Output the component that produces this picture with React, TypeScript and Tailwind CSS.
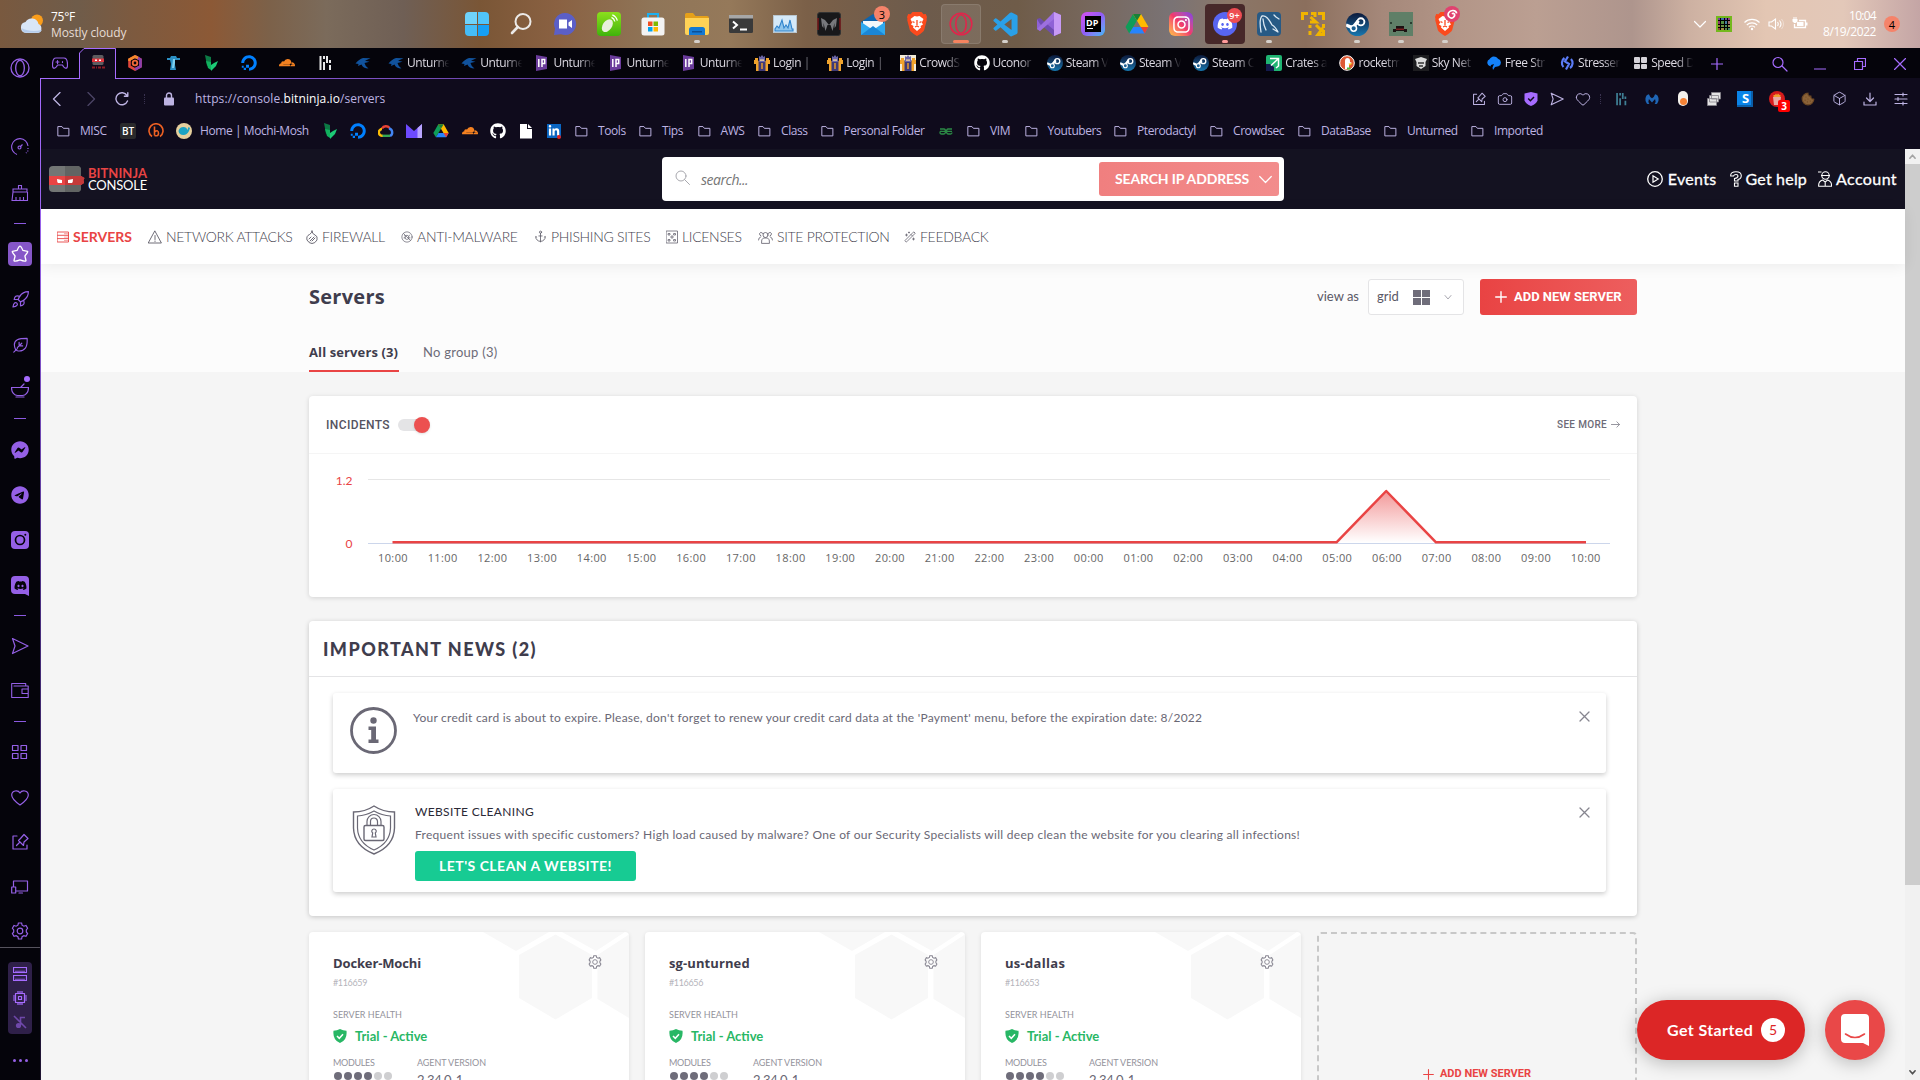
import type { ReactNode } from "react";
import { Anchor, Box, Camera, Cookie, Heart, Rocket, WandSparkles } from "lucide-react";
import {
  FaBrave,
  FaCloudflare,
  FaDigitalOcean,
  FaDiscord,
  FaFacebookMessenger,
  FaGithub,
  FaInstagram,
  FaLinkedinIn,
  FaSteam,
  FaTelegram,
} from "react-icons/fa6";
import { BiLogoVisualStudio } from "react-icons/bi";

/* ---------- small drawing helpers ---------- */

function Svg({ c, box = "0 0 24 24", children }: { c: string; box?: string; children: ReactNode }) {
  return (
    <svg viewBox={box} className={c} fill="none" stroke="currentColor">
      {children}
    </svg>
  );
}

function Line({ d, c, w = 1.2, box = "0 0 18 18" }: { d: string; c: string; w?: number; box?: string }) {
  return (
    <Svg c={c} box={box}>
      <path d={d} strokeWidth={w} strokeLinejoin="round" strokeLinecap="round" />
    </Svg>
  );
}

const FOLDER = "M1.5 4h4.2l1.6 2H13.5v8.500H1.500z";
const PIN = "M6 3H2v13h14v-4M9.500 5.500l3.500-4 4 4-4 3.500-.5 3.500-5-5zM8.500 9.500 5.500 12.500";
const SEND = "M1.500 1.500 17 9 1.500 16.500 4 9z";

function DriveLogo({ c }: { c: string }) {
  return (
    <Svg c={c}>
      <g stroke="none">
        <path d="M8 2 0.500 15 4.300 21.500 12 8.500z" fill="#0f9d58" />
        <path d="M8 2h8l7.500 13h-7.800z" fill="#ffba00" />
        <path d="M8.200 15h15.300l-3.800 6.500H4.300z" fill="#2684fc" />
        <path d="M8 2 12 8.800 16 2z" fill="#188038" />
        <path d="m15.700 15 7.800 0-3.800 6.500z" fill="#ea4335" />
      </g>
    </Svg>
  );
}

function BraveLogo() {
  return (
    <Svg c="size-6">
      <path d="M7.500 0h9l2 2.200 2.300-.3 1.200 3-.5 2 .3 1-2.600 10Q18.500 20 12 24 5.500 20 4.800 17.900L2.200 7.900l.3-1-.5-2 1.200-3 2.300.3z" fill="#fb4a1d" stroke="none" />
      <path d="M12 4.500l2.500-.6L18.500 7l-1.700 3.500 1.200 2-2.500 1.500.5 1.500L12 19l-4-3.500.5-1.500L6 12.500l1.200-2L5.500 7l4-3.100z" fill="#fff" stroke="none" />
      <path d="M12 8v5M9.500 10.500l-2-.8M14.500 10.500l2-.8M10 15l2-1 2 1" stroke="#fb4a1d" strokeWidth="1.300" />
    </Svg>
  );
}

function GreenLeaf({ c }: { c: string }) {
  return (
    <Svg c={c} box="0 0 16 16">
      <g stroke="none">
        <path d="M2 0l6 2v6l-4 3z" fill="#0c7a45" />
        <path d="M3 6l5 1v8l-3-2z" fill="#11b15e" />
        <path d="M8 10l3-2 4-2-2 5-5 5z" fill="#1ccb76" />
      </g>
    </Svg>
  );
}

function Bars({ c }: { c: string }) {
  return (
    <Svg c={c} box="0 0 16 16">
      <path d="M3.500 1v14M7 1v3M7 7v8M10 1v7M13 5v3M13 10v5" strokeWidth="2" />
    </Svg>
  );
}

function Wing() {
  return (
    <Svg c="size-4" box="0 0 16 16">
      <path d="M.5 8.500Q4 4 8 3l7.500.3-5.500 2.500 4.500 1-5 1.200Q10 11 13.500 13.500 8 13.500 6.500 9.500L3 11l.5-2z" fill="#11529c" stroke="none" />
    </Svg>
  );
}

function IpLogo() {
  return (
    <Svg c="size-4" box="0 0 16 16">
      <path d="M2 0l11 2v12L2 16z" fill="#6b3c9b" stroke="none" />
      <path d="M4.800 4v8M8 12V4.500h2.700v4H8" stroke="#fff" strokeWidth="1.500" />
    </Svg>
  );
}

function Warrior({ light }: { light?: boolean }) {
  return (
    <Svg c="size-4" box="0 0 16 16">
      <g stroke="none">
        {light && <path d="M0 0h16v16H0z" fill="#f3ecd9" />}
        <path d="M1 3h3v3h1v10H2V9H0V5h1zM12 3h3v2h1v4h-2v7h-3V6h1z" fill="#f0a32c" />
        <path d="M4.500 5h7v11h-7z" fill="#3f3a76" />
        <path d="M5 1l1.500 1L8 0l1.500 2L11 1v6H5z" fill="#6b66a8" />
        <path d="M6 4.500h4v1.200H6z" fill="#ffe0a0" />
        <path d="M7.300 8h1.400v6H7.300z" fill="#f0a32c" />
      </g>
    </Svg>
  );
}

function SteamLogo({ c }: { c: string }) {
  return (
    <span className={`block overflow-hidden rounded-full bg-linear-to-b from-[#0b1a3c] to-[#1678b0] ${c}`}>
      <Svg c="size-full">
        <path d="M0 12.500 7 15.500 13 8" stroke="#fff" strokeWidth="3.500" />
        <circle cx="15.500" cy="9.200" r="3.700" stroke="#fff" strokeWidth="2" />
        <circle cx="8" cy="16" r="3" stroke="#fff" strokeWidth="1.600" fill="#1a5f92" />
      </Svg>
    </span>
  );
}

function OperaRing({ c }: { c: string }) {
  return (
    <Svg c={c}>
      <circle cx="12" cy="12" r="10.800" strokeWidth="1.600" />
      <ellipse cx="12" cy="12" rx="5.200" ry="9.300" strokeWidth="1.600" />
    </Svg>
  );
}

/* ---------- desktop taskbar ---------- */

function TaskCell({ children, bar, hot }: { children?: ReactNode; bar?: "gray" | "wide" | "pink"; hot?: string }) {
  return (
    <div className="relative flex h-12 w-11 items-center justify-center">
      {hot && <div className={`absolute inset-x-0.5 inset-y-1 rounded ${hot}`} />}
      <div className="relative flex size-6 items-center justify-center">{children}</div>
      {bar === "gray" && <div className="absolute top-10 h-[3px] w-1.5 rounded-full bg-[#d5d0cb]" />}
      {bar === "pink" && <div className="absolute top-10 h-[3px] w-1.5 rounded-full bg-[#ff9a9a]" />}
      {bar === "wide" && <div className="absolute top-10 h-[3px] w-4 rounded-full bg-[#f5835f]" />}
    </div>
  );
}

function Taskbar() {
  return (
    <div className="flex h-12 items-center bg-[linear-gradient(90deg,#79593f_0%,#6f5c4a_4%,#7d5a3f_7%,#8c5936_11%,#7c6149_14%,#7b6b5b_17%,#6f5f55_21%,#7a5636_25%,#8a6142_29%,#8f7558_34%,#95795a_38%,#7b6048_42%,#6d5b4c_48%,#6f5c49_53%,#77685e_57%,#7a7375_61%,#8b7768_64%,#8b6f5d_68%,#a5887a_72%,#b39688_76%,#bb9f92_80%,#ae958d_85%,#cdb1a2_88%,#e3c6b3_92%,#e3c8b9_96%,#c4a5a5_100%)]">
      <div className="flex w-[455px] items-center pl-[20px]">
        <Svg c="h-[22px] w-6" box="0 0 24 22">
          <g stroke="none">
            <circle cx="17" cy="7.500" r="6" fill="#f99d1c" />
            <path d="M6 20a5.500 5.500 0 0 1-.5-10.900A7 7 0 0 1 18.500 11 4.800 4.800 0 0 1 18 20z" fill="#d9e6f7" />
            <path d="M5 19.800h13a4.600 4.600 0 0 0 4-3c-7 2-14 1.500-20-1.500a5 5 0 0 0 3 4.500z" fill="#b6cdec" />
          </g>
        </Svg>
        <div className="ml-[7px] pt-0.5 text-xs leading-4">
          <div className="tracking-[-0.27px] text-white">75°F</div>
          <div className="tracking-[-0.11px] text-[#e6dcd4]">Mostly cloudy</div>
        </div>
      </div>
      <TaskCell>
        <div className="grid size-6 grid-cols-2 gap-px">
          <div className="rounded-tl-sm bg-[#6fd3fb]" />
          <div className="rounded-tr-sm bg-[#50c4fa]" />
          <div className="rounded-bl-sm bg-[#45bdf8]" />
          <div className="rounded-br-sm bg-[#169ff5]" />
        </div>
      </TaskCell>
      <TaskCell>
        <Svg c="size-6 text-[#eceae8]">
          <circle cx="14" cy="9.500" r="7.500" strokeWidth="2" />
          <path d="M8.800 15 3 21" strokeWidth="2.600" strokeLinecap="round" />
        </Svg>
      </TaskCell>
      <TaskCell>
        <Svg c="size-6">
          <path d="M12 1a11 11 0 1 1-4 21.200L1 23l1-6.500A11 11 0 0 1 12 1z" fill="#5b5fc7" stroke="none" />
          <path d="M6 7.500h8v9H6zM15.500 10.500 19 8v8l-3.500-2.500z" fill="#fff" stroke="none" />
        </Svg>
      </TaskCell>
      <TaskCell>
        <div className="flex size-6 items-center justify-center rounded bg-linear-to-b from-[#8be01c] to-[#3eb30c]">
          <Svg c="size-5">
            <ellipse cx="10" cy="14" rx="5.500" ry="8.500" transform="rotate(35 10 14)" fill="#e9f0dc" stroke="none" />
            <path d="M15 4a7 7 0 0 1 4 5M16 1a10 10 0 0 1 6 7" stroke="#fff" strokeWidth="1.500" />
          </Svg>
        </div>
      </TaskCell>
      <TaskCell>
        <Svg c="size-6">
          <path d="M7 6V2h10v4" stroke="#1cb0f0" strokeWidth="2" />
          <rect x="0.500" y="5.500" width="23" height="18" rx="2.500" fill="#f3f3f3" stroke="none" />
          <g stroke="none">
            <path d="M7 9.500h4.500V14H7z" fill="#f25022" />
            <path d="M12.500 9.500H17V14h-4.500z" fill="#7fba00" />
            <path d="M7 15h4.500v4.500H7z" fill="#00a4ef" />
            <path d="M12.500 15H17v4.500h-4.500z" fill="#ffb900" />
          </g>
        </Svg>
      </TaskCell>
      <TaskCell bar="gray">
        <Svg c="size-6">
          <g stroke="none">
            <path d="M0 2.500Q0 1 1.500 1H8l2.500 3H22q2 0 2 2v3H0z" fill="#e5a01a" />
            <path d="M0 6h24v15q0 2-2 2H2q-2 0-2-2z" fill="#ffd256" />
            <path d="M4 23v-5.500Q4 15 6.500 15h11q2.500 0 2.500 2.500V23z" fill="#1479d2" />
            <path d="M7 19h10v1.500H7z" fill="#0c4f93" />
          </g>
        </Svg>
      </TaskCell>
      <TaskCell>
        <Svg c="size-6">
          <rect x="0" y="3" width="24" height="18" rx="1.500" fill="#3a3a3a" stroke="none" />
          <path d="M0 3h24v3.500H0z" fill="#a7a7a7" stroke="none" />
          <path d="M4 9.500 8 13l-4 3.500M11 17.500h7" stroke="#fff" strokeWidth="2" />
        </Svg>
      </TaskCell>
      <TaskCell>
        <Svg c="size-6">
          <rect x="0.500" y="3.500" width="23" height="17" fill="#d5e9f8" stroke="#b9c6cf" />
          <path d="M2 19v-2l2-3 2 2 3-8 2 8 2-3 2 3 2-8 2 9h1v2z" fill="#8fc5ec" stroke="#2f83cc" strokeWidth="1.100" />
        </Svg>
      </TaskCell>
      <TaskCell>
        <Svg c="size-6">
          <rect x="0.500" y="0.500" width="23" height="23" rx="2.500" fill="#18181a" stroke="#333" />
          <path d="M1 6v12M23 6v12" stroke="#a51212" />
          <path d="M4 6l4 2 4 5 4-5 4-2-1 8-1.500 2v-5l-2 8-2-6h-3l-2 6-2-8v5L5 14z" fill="#77787c" stroke="none" />
        </Svg>
      </TaskCell>
      <TaskCell>
        <Svg c="size-6">
          <g stroke="none">
            <path d="M0 10 12 2l12 8v13H0z" fill="#0f64ad" />
            <path d="M2 9h20v8H2z" fill="#f4f8fb" />
            <path d="M0 10l12 8 12-8v13H0z" fill="#2fa9ef" />
            <path d="M0 23 12 14l12 9z" fill="#1b86d6" />
          </g>
        </Svg>
        <span className="absolute -top-1.5 left-[13px] flex size-4 items-center justify-center rounded-full bg-[#f5836a] text-[11px] leading-none text-black">3</span>
      </TaskCell>
      <TaskCell>
        <BraveLogo />
      </TaskCell>
      <TaskCell bar="wide" hot="border border-white/10 bg-white/10">
        <OperaRing c="size-6 text-[#e0254b]" />
      </TaskCell>
      <TaskCell bar="gray">
        <BiLogoVisualStudio className="size-[29px] shrink-0 text-[#2aa0e8]" />
      </TaskCell>
      <TaskCell>
        <Svg c="size-6">
          <g stroke="none">
            <path d="M17 0l7 3v18l-7 3L3 9 0 7v10l3 2z" fill="#8f62d6" />
            <path d="M0 7l3-1 14 12v6L3 12z" fill="#6f4cb0" />
            <path d="M17 0v7L3 19l-3-2z" fill="#9d70e0" />
            <path d="M17 0l7 3v18l-7 3z" fill="#c79af5" />
          </g>
        </Svg>
      </TaskCell>
      <TaskCell>
        <div className="relative flex size-6 items-center justify-center rounded-md bg-linear-to-br from-[#d94bf0] via-[#8f5cf5] to-[#22b8f5]">
          <div className="flex size-4 flex-col bg-black pt-0.5 pl-px text-[9px] leading-[9px] font-bold text-white">
            DP
            <span className="mt-px ml-px h-px w-1.5 bg-white" />
          </div>
        </div>
      </TaskCell>
      <TaskCell>
        <DriveLogo c="size-6" />
      </TaskCell>
      <TaskCell>
        <div className="flex size-6 items-center justify-center rounded-md bg-linear-to-tr from-[#fdc13d] via-[#f2386b] to-[#8134e8]">
          <FaInstagram className="size-[19px] text-white" />
        </div>
      </TaskCell>
      <TaskCell bar="pink" hot="bg-[#472829]">
        <div className="flex size-6 items-center justify-center rounded-full bg-[#5865f2]">
          <FaDiscord className="size-4 text-white" />
        </div>
        <span className="absolute -top-1 left-[14px] flex size-[15px] items-center justify-center rounded-full bg-[#ee4d53] text-[9px] leading-none font-semibold text-white">9+</span>
      </TaskCell>
      <TaskCell bar="gray">
        <div className="flex size-6 items-center justify-center rounded-sm bg-[#275a85]">
          <Line box="0 0 24 24" c="size-6 text-[#dce9f3]" w={1.3} d="M4 20C3 14 2 7 5 4c4-1 8 5 10 9 2 1 4 3 6 7l-5-3M6 7l1 6 2 5M17 3l2 2 3 2" />
        </div>
      </TaskCell>
      <TaskCell>
        <Svg c="size-6">
          <path d="M1.500 8V1.500H7M10 1.500h4V5M22.500 8V1.500H17M9 10h6L9.500 5M22.500 12v4M22.500 18v4.500H17L22 16M9 13v3M9 19v4M15 13l6 6" stroke="#f0b400" strokeWidth="3" />
        </Svg>
      </TaskCell>
      <TaskCell bar="gray">
        <SteamLogo c="size-[23px]" />
      </TaskCell>
      <TaskCell bar="gray">
        <Svg c="size-6">
          <path d="M0 0h24v24H0z" fill="#5f7f67" stroke="none" />
          <path d="M2 10v2M22 10v2" stroke="#1d2a20" strokeWidth="1.500" />
          <path d="M4 20v-3h3v-3h8v3h3v3h-3v-1H7v1z" fill="#1c1212" stroke="none" />
          <path d="M7 16.500h8V18H7z" fill="#7a1f1f" stroke="none" />
        </Svg>
      </TaskCell>
      <TaskCell bar="gray">
        <BraveLogo />
        <Svg c="absolute -top-1.5 left-[11px] size-4">
          <circle cx="12" cy="12" r="12" fill="#e0426f" stroke="none" />
          <path d="M12 12c3-3 6 2 2 5s-10-2-7-7 11-4 12 1" stroke="#fff" strokeWidth="2.500" />
        </Svg>
      </TaskCell>
      <div className="ml-auto flex items-center pr-5">
        <Line box="0 0 12 12" c="mr-2.5 h-3 w-3 text-white" d="M0.500 3.500 6 9l5.500-5.500" />
        <div className="mr-3 grid size-4 grid-cols-4 gap-px border-2 border-[#74b81d] bg-black">
          <i className="bg-[#7a3f9a]" /><i className="bg-[#4068a8]" /><i className="bg-[#6a45a0]" /><i className="bg-[#903f88]" />
          <i className="bg-[#8f3868]" /><i className="bg-[#558f40]" /><i className="bg-[#487f9f]" /><i className="bg-[#a06868]" />
          <i className="bg-[#94803c]" /><i className="bg-[#6a9040]" /><i className="bg-[#4f9060]" /><i className="bg-[#949450]" />
          <i className="bg-[#944838]" /><i className="bg-[#a08a40]" /><i className="bg-[#5c8a40]" /><i className="bg-[#408a68]" />
        </div>
        <Svg c="mr-2 size-4 text-white" box="0 0 16 16">
          <path d="M0.500 6.500a10.500 10.500 0 0 1 15 0M2.800 9a7.400 7.400 0 0 1 10.400 0M5 11.300a4.200 4.200 0 0 1 6 0" strokeWidth="1.100" />
          <circle cx="8" cy="13" r="1.200" fill="currentColor" stroke="none" />
        </Svg>
        <Svg c="mr-2 size-4 text-white" box="0 0 16 16">
          <path d="M1 6h2.500L7.500 3v10L3.500 10H1zM9.500 6q1.500 2 0 4M11.500 4.500q3 3.500 0 7" strokeWidth="1.100" />
          <path d="M13.500 3q4 5 0 10" strokeWidth="1" opacity=".4" />
        </Svg>
        <Svg c="mr-[15px] size-4 text-white" box="0 0 16 16">
          <path d="M7 4.500h6.500v7h-11V8" strokeWidth="1.300" />
          <path d="M5 10V6h6.500v4zM14 6.500h1.500v3H14zM0.500 3h5v2.500L3.800 7H2.200L0.500 5.500zM1.500 1h1v2h-1zM3.500 1h1v2h-1z" fill="currentColor" stroke="none" />
        </Svg>
        <div className="mr-2 text-right text-xs leading-4 text-white">
          <div className="tracking-[-0.72px]">10:04</div>
          <div className="tracking-[-0.43px]">8/19/2022</div>
        </div>
        <div className="flex size-4 items-center justify-center rounded-full bg-[#f5836a] text-[11px] leading-none text-black">4</div>
      </div>
    </div>
  );
}

/* ---------- browser side rail ---------- */

function RailDash({ c }: { c: string }) {
  return <div className={`h-px w-3 bg-[#8c5ae0] ${c}`} />;
}

function Rail() {
  return (
    <div className="flex h-[1032px] w-10 shrink-0 flex-col items-center bg-[#05040b] text-[#9560e6]">
      <OperaRing c="mt-[10px] size-5" />
      <Svg c="mt-[60px] size-[18px]" box="0 0 18 18">
        <path d="M6 16.500A8.200 8.200 0 1 1 17 8" strokeWidth="1.100" />
        <path d="M17 10v1M16.800 12.500v1M15 15l.5-.5M9 9l2.500-2.500" strokeWidth="1.200" />
        <circle cx="8.500" cy="9.500" r="1.500" strokeWidth="1.100" />
      </Svg>
      <Svg c="mt-[28px] size-[18px]" box="0 0 18 18">
        <path d="M7.500 5V1.500h3V5M2 5h14v3H2zM2 8l-1 8.500h15.500V8M5 13v3M9 13v3M12.500 13v3" strokeWidth="1.100" />
      </Svg>
      <RailDash c="mt-[21px]" />
      <div className="mt-[18px] flex size-6 items-center justify-center rounded-sm bg-[#8657c8] text-white">
        <Line c="size-[18px]" w={1.3} d="M9 1.200Q10 1.200 11.800 5.300L16.500 6.300Q17.500 6.700 13.900 11L15 15.500Q15 17 9 14.800 3 17 3 15.500L4.100 11Q.5 6.700 1.500 6.300L6.200 5.300Q8 1.200 9 1.200z" />
      </div>
      <Rocket className="mt-6 size-[19px]" strokeWidth={1.5} />
      <Line c="mt-[28px] size-4" d="M2 17l4-4M4 14Q.5 6 6 3 9 1.500 17 1.500q.5 8-2 11-3 4-9 3zM6 12l5-5M8 6v4h4" w={1.3} />
      <div className="relative mt-[27px]">
        <Line c="size-[18px]" d="M0.500 7.500h17c0 5-3 8-6 8H6.500c-3 0-6-3-6-8zM5 17h8M10 7l3-3" w={1.2} />
        <div className="absolute -top-1 left-[13px] size-1.5 rounded-full bg-[#a66cff]" />
      </div>
      <RailDash c="mt-[20px]" />
      <FaFacebookMessenger className="mt-[22px] size-[18px]" />
      <FaTelegram className="mt-[27px] size-[18px]" />
      <Svg c="mt-[27px] size-[18px]" box="0 0 18 18">
        <rect width="18" height="18" rx="4" fill="currentColor" stroke="none" />
        <circle cx="9" cy="9" r="4.500" stroke="#05040b" strokeWidth="1.700" />
        <circle cx="14.300" cy="3.700" r="1" fill="#05040b" stroke="none" />
      </Svg>
      <div className="relative mt-[27px] flex size-[18px] items-center justify-center rounded-t-sm rounded-bl-sm bg-[#9560e6] text-[#05040b]">
        <FaDiscord className="size-[13px]" />
        <Svg c="absolute -bottom-0.5 right-0 h-1 w-1" box="0 0 4 4">
          <path d="M0 2h4v2z" fill="currentColor" stroke="none" className="text-[#9560e6]" />
        </Svg>
      </div>
      <RailDash c="mt-[21px]" />
      <Line c="mt-[21px] size-[18px]" d={SEND} />
      <Line c="mt-[27px] size-[18px]" d="M0.700 1.500h14V4H3M0.700 1.500v14h16.500V4H15M17 7h-6v4.500h6" w={1.1} />
      <RailDash c="mt-[21px]" />
      <Line c="mt-[21px] size-[18px]" d="M1.500 2.500h5.500v5H1.500zM10 2.500h5.500v5H10zM1.500 10.500h5.500v5H1.500zM10 10.500h5.500v5H10z" />
      <Line c="mt-[28px] size-[18px]" d="M9 16C4 12.500 0.700 9.500 0.700 6 0.700 1.500 7 0.500 9 4c2-3.500 8.300-2.500 8.300 2C17.300 9.500 14 12.500 9 16z" />
      <Line c="mt-[26px] size-[18px]" d={PIN} />
      <Line c="mt-[27px] size-[18px]" d="M2.500 9V3H16.500v10H5M0.700 9h4v6h-4zM8 15h3.500" />
      <Svg c="mt-[26px] size-[18px]" box="0 0 18 18">
        <path d="M7.400 1h3.200l.5 2.200 1.800 1 2.100-.7 1.600 2.800L15.300 8v2l1.300 1.600-1.600 2.800-2.100-.7-1.800 1-.5 2.300H7.400l-.5-2.300-1.800-1-2.100.7-1.600-2.800L2.700 10V8L1.400 6.300 3 3.500l2.100.7 1.800-1z" strokeWidth="1.200" />
        <circle cx="9" cy="9" r="2.800" strokeWidth="1.200" />
      </Svg>
      <div className="mt-[7px] h-px w-10 shrink-0 bg-[#56535e]" />
      <div className="mt-[14px] flex h-[72px] w-6 flex-col items-center gap-[10px] rounded bg-[#2f2049] pt-[5px] text-[#a66cff]">
        <Line c="size-[14px]" box="0 0 14 14" d="M.5.500h13v5H.5zM.5 8.500h13v5H.5zM3 4v1M5 4v1M7 4v1M9 4v1M11 4v1M3 12v1M5 12v1M7 12v1M9 12v1M11 12v1" />
        <Line c="size-[14px]" box="0 0 14 14" d="M2.500 2.500h9v9h-9zM5.500 5.500h3v3h-3zM5 0v2M7 0v2M9 0v2M5 12v2M7 12v2M9 12v2M0 5h2M0 7h2M0 9h2M12 5h2M12 7h2M12 9h2" />
        <Svg c="size-[14px] text-[#6f48aa]" box="0 0 14 14">
          <path d="M1 1 13 13M7.500 10V2.500H12" strokeWidth="1.600" />
          <circle cx="5.500" cy="10.500" r="2.600" fill="currentColor" stroke="none" />
        </Svg>
      </div>
      <div className="mt-[25px] flex gap-[3px]">
        <i className="size-[3px] rounded-full bg-current" />
        <i className="size-[3px] rounded-full bg-current" />
        <i className="size-[3px] rounded-full bg-current" />
      </div>
    </div>
  );
}

/* ---------- browser tabs and bars ---------- */

function Tab({ icon, label }: { icon: ReactNode; label: string }) {
  return (
    <div className="flex h-[30px] w-[73.2px] shrink-0 items-center pl-1.5">
      <span className="flex size-4 shrink-0 items-center justify-center">{icon}</span>
      <span className="ml-[3px] w-[47px] mask-r-from-55% mask-r-to-90% text-xs tracking-[-0.45px] whitespace-pre text-[#dcd9e2]">{label}</span>
    </div>
  );
}

function MiniTab({ children }: { children: ReactNode }) {
  return <div className="flex h-[30px] w-[38px] items-center justify-center">{children}</div>;
}

function TabStrip() {
  return (
    <div className="relative flex h-[31px] bg-[#05040b]">
      <div className="absolute bottom-0 h-px w-full bg-[linear-gradient(90deg,#a66cff_0%,#6a44a8_25%,#2d1f4b_50%,#0f0b1c_55%)]" />
      <MiniTab>
        <Line c="size-4 text-[#9560e6]" box="0 0 16 16" d="M4 3h8q3.500 0 3.500 7 0 4-2.500 3-1.500-.6-2.500-3h-5q-1 2.400-2.500 3-2.500 1-2.500-3Q.5 3 4 3zM5.500 5.500v3M4 7h3M10.500 6.500v1" />
      </MiniTab>
      <div className="relative flex h-[31px] w-[37px] items-center justify-center bg-[#0f0b1c]">
        <Svg c="absolute inset-0 size-full text-[#a66cff]" box="0 0 37 31">
          <path d="M0 0h5L0.500 5z" fill="#05040b" stroke="none" />
          <path d="M0.500 31V5L5 .5h31.500V31" strokeWidth="1" />
        </Svg>
        <Svg c="mb-0.5 size-4" box="0 0 16 16">
          <g stroke="none">
            <rect x="2.500" y="0" width="11" height="10" rx="1.500" fill="#5e5c60" />
            <path d="M2 3.500h12V7H2z" fill="#e0343c" />
            <path d="M5 4.500h2v1.500H5zM9 4.500h2v1.500H9z" fill="#fff" />
            <path d="M2 11.500h3v2H2zM6 11.500h1v2H6zM8 11.500h3v2H8zM12 11.500h3v2h-3z" fill="#8c1d26" />
          </g>
        </Svg>
      </div>
      <MiniTab>
        <Svg c="size-4" box="0 0 16 16">
          <path d="M8 1.500 13.500 4.500v7L8 14.500 2.500 11.500v-7z" stroke="#e0453a" strokeWidth="2.600" />
          <path d="M8 1.500 13.500 4.500v7L8 14.500" stroke="#8a3fae" strokeWidth="2.600" />
          <path d="M2.500 6v-1.500L8 1.500l3 1.500" stroke="#f58a2c" strokeWidth="2.600" />
          <circle cx="8" cy="8" r="2.300" stroke="#f26a3a" strokeWidth="1.800" />
        </Svg>
      </MiniTab>
      <MiniTab>
        <Svg c="size-4" box="0 0 16 16">
          <g stroke="none">
            <path d="M2 3h3l1-2h5l1 2h3v2H9l2 10H5l1-6-1-4H2z" fill="#2b8fc4" />
            <path d="M8 4h2v4l-1 5H7z" fill="#7fd0ee" />
          </g>
        </Svg>
      </MiniTab>
      <MiniTab><GreenLeaf c="size-4" /></MiniTab>
      <MiniTab><FaDigitalOcean className="size-4 text-[#0080ff]" /></MiniTab>
      <MiniTab><FaCloudflare className="size-4 text-[#f48120]" /></MiniTab>
      <MiniTab><Bars c="size-4 text-[#e8e8ea]" /></MiniTab>
      <MiniTab><Wing /></MiniTab>
      <Tab icon={<Wing />} label="Unturne" />
      <Tab icon={<Wing />} label="Unturne" />
      <Tab icon={<IpLogo />} label="Unturne" />
      <Tab icon={<IpLogo />} label="Unturne" />
      <Tab icon={<IpLogo />} label="Unturne" />
      <Tab icon={<Warrior />} label="Login |" />
      <Tab icon={<Warrior />} label="Login |" />
      <Tab icon={<Warrior light />} label="CrowdS" />
      <Tab icon={<FaGithub className="size-4 text-white" />} label="Uconor" />
      <Tab icon={<SteamLogo c="size-4" />} label="Steam V" />
      <Tab icon={<SteamLogo c="size-4" />} label="Steam V" />
      <Tab icon={<SteamLogo c="size-4" />} label="Steam C" />
      <Tab
        icon={
          <Svg c="size-4" box="0 0 16 16">
            <rect width="16" height="16" rx="2" fill="#1fb472" stroke="none" />
            <path d="M0 9h4l4 3v4H0z" fill="#131a4d" stroke="none" />
            <path d="M4 3.500h8.500v7.500L10 13M12 4 5 10.500" stroke="#fff" strokeWidth="1.500" />
          </Svg>
        }
        label="Crates a"
      />
      <Tab
        icon={
          <Svg c="size-4" box="0 0 16 16">
            <circle cx="8" cy="8" r="7.300" fill="#de5833" stroke="#fff" strokeWidth="1" />
            <path d="M6 14V6q0-3 2.500-3T11 6v1l2 1-3 1.500V14z" fill="#fff" stroke="none" />
            <path d="M9.500 8.500h4l-3 2z" fill="#fdd20a" stroke="none" />
            <path d="M8 12.500h3.500v2H8z" fill="#4cba3c" stroke="none" />
          </Svg>
        }
        label="rocketm"
      />
      <Tab
        icon={
          <Svg c="size-4" box="0 0 16 16">
            <path d="M0 0h16v16H0z" fill="#1d1d20" stroke="none" />
            <path d="M2 4l6-2 6 2-1.500 3v4L8 14l-4.500-3V7z" fill="#dcdcdc" stroke="none" />
            <path d="M5 8h6M6 11h4" stroke="#333" strokeWidth="1.300" />
          </Svg>
        }
        label="Sky Net"
      />
      <Tab
        icon={
          <Svg c="size-4" box="0 0 16 16">
            <path d="M4.500 11.500a3.800 3.800 0 0 1-1-7.200A5 5 0 0 1 12 3.700a4 4 0 0 1 .5 7.500L9 12l-2 3-.5-2.500L8 9l-3 1z" fill="#1482fa" stroke="none" />
          </Svg>
        }
        label="Free Str"
      />
      <Tab
        icon={
          <Svg c="size-4 text-[#5b7cf7]" box="0 0 16 16">
            <path d="M9 1.500 6 6.500l4 2.500-3 5.500M5.500 3A6 6 0 0 0 4.500 12M11 13A6 6 0 0 0 12 4" strokeWidth="2.200" />
          </Svg>
        }
        label="Stresser"
      />
      <Tab
        icon={
          <span className="grid h-3 w-[13px] grid-cols-2 gap-px">
            <i className="rounded-[1px] bg-[#d5d3d9]" /><i className="rounded-[1px] bg-[#d5d3d9]" />
            <i className="rounded-[1px] bg-[#d5d3d9]" /><i className="rounded-[1px] bg-[#d5d3d9]" />
          </span>
        }
        label="Speed D"
      />
      <div className="flex w-9 items-center justify-center text-[#a66cff]">
        <Line c="size-3" box="0 0 12 12" d="M6 .5v11M.5 6h11" />
      </div>
      <div className="ml-auto flex text-[#a66cff]">
        <div className="flex w-10 items-center justify-center"><Line c="size-4" box="0 0 16 16" d="M11 6.500a5 5 0 1 1-10 0 5 5 0 0 1 10 0zM10 10l5 5" /></div>
        <div className="flex w-10 items-center justify-center"><Line c="size-3" box="0 0 12 12" d="M0 11h12" /></div>
        <div className="flex w-10 items-center justify-center"><Line c="size-3" box="0 0 12 12" d="M.5 3.500h8v8h-8zM3.500 3.500v-3h8v8h-3" /></div>
        <div className="flex w-10 items-center justify-center"><Line c="size-3" box="0 0 12 12" d="M.5.500l11 11M11.500.500l-11 11" /></div>
      </div>
    </div>
  );
}

function Cell({ children }: { children: ReactNode }) {
  return <div className="relative flex h-8 w-[31.2px] items-center justify-center">{children}</div>;
}

function AddressBar() {
  return (
    <div className="flex h-[38px] items-center pt-px pl-[1px] text-[#bdb3e2]">
      <div className="flex w-8 items-center justify-center"><Line c="size-3.5" box="0 0 14 14" d="M9 .5 2.500 7 9 13.500" w={1.3} /></div>
      <div className="flex w-8 items-center justify-center text-[#4b4566]"><Line c="size-3.5" box="0 0 14 14" d="M5 .5 11.500 7 5 13.500" w={1.3} /></div>
      <div className="flex w-8 items-center justify-center"><Line c="size-3.5" box="0 0 14 14" d="M12.500 9A6 6 0 1 1 12 3.500M12.800 .8v3.400H9.400" w={1.4} /></div>
      <div className="ml-[6px] h-2.5 w-0 border-l border-dotted border-[#3a3350]" />
      <Svg c="ml-[18px] h-3.5 w-3" box="0 0 12 14">
        <rect x="1" y="5.500" width="10" height="8" rx="1" fill="currentColor" stroke="none" />
        <path d="M3.500 6V3.500a2.500 2.500 0 0 1 5 0V6" strokeWidth="1.400" />
      </Svg>
      <div className="ml-5 text-xs tracking-[0.09px]">
        https://console.<span className="font-medium text-white">bitninja.io</span><span className="tracking-normal">/servers</span>
      </div>
      <div className="ml-auto flex items-center pr-[3px]">
        <div className="flex w-[26px] justify-center"><Line c="size-3.5" d={PIN} w={1.3} /></div>
        <div className="flex w-[26px] justify-center"><Camera className="size-4" strokeWidth={1.4} /></div>
        <div className="flex w-[26px] justify-center">
          <Svg c="size-3.5" box="0 0 14 14">
            <path d="M7 0 13.500 1.500v7Q12 12 7 14 2 12 .5 8.500v-7z" fill="#a66cff" stroke="none" />
            <path d="m4.200 6.500 2.200 2.200L10 5" stroke="#0f0b1c" strokeWidth="1.500" />
          </Svg>
        </div>
        <div className="flex w-[26px] justify-center"><Line c="size-3.5" d={SEND} w={1.4} /></div>
        <div className="flex w-[26px] justify-center"><Heart className="size-4" strokeWidth={1.5} /></div>
        <div className="mx-1 h-2.5 w-0 border-l border-dotted border-[#3a3350]" />
        <Cell><Bars c="size-3.5 text-[#3f7f94]" /></Cell>
        <Cell>
          <Svg c="size-3.5" box="0 0 16 16">
            <path d="M2 13Q0 11 .5 7.500 1 3 4.500 2.500q1 3.500 3.500 4.500 2.500-1 3.500-4.500Q15 3 15.500 7.500 16 11 14 13q-1 1-3 .5 2-2 .5-5.500L8 12 4.500 8q-1.500 3.500.5 5.500-2 .5-3-.5z" fill="#1f66b5" stroke="none" />
          </Svg>
        </Cell>
        <Cell>
          <div className="flex h-[15px] w-2.5 items-end justify-center rounded-full bg-[#f4f1ec]">
            <div className="mb-px size-[7px] rounded-full bg-[#f58235]" />
          </div>
        </Cell>
        <Cell>
          <Svg c="size-3.5" box="0 0 14 14">
            <path d="M4.500.500h9V7h-9zM2.500 3.500h9V10h-9zM.5 6.500h9v7h-9z" fill="#e3e3e3" stroke="#85838a" strokeWidth=".8" />
          </Svg>
        </Cell>
        <Cell>
          <div className="flex size-4 items-center justify-center bg-[#0a84e8] text-[13px] leading-none font-bold text-white shadow-[inset_-2px_-2px_0_#0b5ea8]">S</div>
        </Cell>
        <Cell>
          <Svg c="size-4" box="0 0 16 16">
            <circle cx="8" cy="8" r="8" fill="#d61b1b" stroke="none" />
            <path d="M4 6h8l-1 8H5z" fill="#e9a9a3" stroke="none" />
            <path d="M4.500 6V4h1.500l1-1.500L8 4l1-1.500L10.500 4h1v2z" fill="#f0a030" stroke="none" />
          </Svg>
          <span className="absolute top-[17px] left-[17px] flex h-3 w-3 items-center justify-center rounded-[2px] bg-[#f00] text-[10px] leading-none font-bold text-white">3</span>
        </Cell>
        <Cell><Cookie className="size-3.5 fill-[#8a6238] text-[#6d4824]" /></Cell>
        <Cell><Box className="size-[15px]" strokeWidth={1.5} /></Cell>
        <Cell><Line c="size-3.5" box="0 0 14 14" d="M7 1v8M3.500 6 7 9.500 10.500 6M1 10v3h12v-3" /></Cell>
        <Cell><Line c="size-3.5" box="0 0 14 14" d="M1 2.500h12M1 7h12M1 11.500h12M9 1v3M4 5.500v3M9 10v3" /></Cell>
      </div>
    </div>
  );
}

const folder = <Line c="size-4" box="0 0 16 18" d={FOLDER} w={1.1} />;

const bookmarks: { w: string; icon: ReactNode; label?: string }[] = [
  { w: "w-[64px]", icon: folder, label: "MISC" },
  { w: "w-[28px]", icon: <span className="flex size-4 items-center justify-center rounded-[2px] bg-[#2a2a2c] text-[10px] font-semibold text-white">BT</span> },
  {
    w: "w-[28px]",
    icon: (
      <Svg c="size-4 text-[#ee6123]" box="0 0 16 16">
        <path d="M4 13.500A7 7 0 1 1 12 13.500M6.500 3.500v9M6.500 9q4-3 4 1.500 0 3-4 2" strokeWidth="1.600" />
      </Svg>
    ),
  },
  {
    w: "w-[146px]",
    icon: (
      <Svg c="size-4" box="0 0 16 16">
        <circle cx="8" cy="8" r="8" fill="#e5cf9d" stroke="none" />
        <path d="M2.500 8q1-4 5-4 3 0 4 3l1-3 1.500 1-1 3Q11 12 7.500 12 3 12 2.500 8z" fill="#1aa3c4" stroke="none" />
      </Svg>
    ),
    label: "Home | Mochi-Mosh",
  },
  { w: "w-[28px]", icon: <GreenLeaf c="size-4" /> },
  { w: "w-[28px]", icon: <FaDigitalOcean className="size-4 text-[#0080ff]" /> },
  {
    w: "w-[28px]",
    icon: (
      <Svg c="size-4" box="0 0 16 16">
        <path d="M4 5.500a4.500 4.500 0 0 1 7.500-.5" stroke="#ea4335" strokeWidth="2.400" />
        <path d="M11 5.500a4 4 0 0 1 1 7.500" stroke="#4285f4" strokeWidth="2.400" />
        <path d="M4 12.800h8" stroke="#34a853" strokeWidth="2.400" />
        <path d="M4.500 12.800A3.300 3.300 0 0 1 4 6" stroke="#fbbc05" strokeWidth="2.400" />
      </Svg>
    ),
  },
  {
    w: "w-[27px]",
    icon: (
      <Svg c="size-4" box="0 0 16 16">
        <path d="M0 1l8 7 8-7v14H0z" fill="#6d4aff" stroke="none" />
        <path d="M11.500 5 16 1v14h-4.500z" fill="#b9a5ff" stroke="none" />
      </Svg>
    ),
  },
  { w: "w-[29px]", icon: <DriveLogo c="size-4" /> },
  { w: "w-[28px]", icon: <FaCloudflare className="size-4 text-[#f48120]" /> },
  { w: "w-[28px]", icon: <FaGithub className="size-4 text-white" /> },
  {
    w: "w-[28px]",
    icon: (
      <Svg c="size-4" box="0 0 16 16">
        <path d="M2 1h7v5h5v9.500H2zM10 1l4 4h-4z" fill="#fff" stroke="none" />
      </Svg>
    ),
  },
  {
    w: "w-[28px]",
    icon: (
      <span className="relative flex size-3.5 items-center justify-center bg-[#0a66c2]">
        <FaLinkedinIn className="size-3 text-white" />
        <i className="absolute right-0 -bottom-px size-1 rounded-full bg-[#e02020]" />
      </span>
    ),
  },
  { w: "w-[64px]", icon: folder, label: "Tools" },
  { w: "w-[58.5px]", icon: folder, label: "Tips" },
  { w: "w-[60.5px]", icon: folder, label: "AWS" },
  { w: "w-[62.5px]", icon: folder, label: "Class" },
  { w: "w-[118.5px]", icon: folder, label: "Personal Folder" },
  {
    w: "w-[28px]",
    icon: (
      <Svg c="size-4 text-[#2b8a45]" box="0 0 16 16">
        <path d="M2 6h4q1.500 0 1.500 2.500T5.500 11h-2Q2 11 2 9.500T3.500 8.300H14M14 6h-4q-1.500 0-1.500 2.500T10.500 11h2Q14 11 14 9.500" strokeWidth="1.300" />
      </Svg>
    ),
  },
  { w: "w-[57.5px]", icon: folder, label: "VIM" },
  { w: "w-[89.5px]", icon: folder, label: "Youtubers" },
  { w: "w-[96px]", icon: folder, label: "Pterodactyl" },
  { w: "w-[88px]", icon: folder, label: "Crowdsec" },
  { w: "w-[86px]", icon: folder, label: "DataBase" },
  { w: "w-[87px]", icon: folder, label: "Unturned" },
  { w: "w-[80px]", icon: folder, label: "Imported" },
];

function Bookmarks() {
  return (
    <div className="flex h-8 items-center pb-1 pl-[15px] text-[#bdb3e2]">
      {bookmarks.map((b, i) => (
        <div key={i} className={`flex shrink-0 items-center gap-2 ${b.w}`}>
          <span className="flex size-4 shrink-0 items-center justify-center">{b.icon}</span>
          {b.label && <span className="text-xs tracking-[-0.42px] whitespace-nowrap">{b.label}</span>}
        </div>
      ))}
    </div>
  );
}

/* ---------- console page ---------- */

function SiteHeader() {
  return (
    <div className="flex h-[60px] shrink-0 items-center bg-[#141221]">
      <Svg c="ml-2 h-[26px] w-9" box="0 0 36 26">
        <g stroke="none">
          <rect x="0" y="0" width="32" height="26" rx="4" fill="#737675" />
          <path d="M16 0h12q4 0 4 4v18q0 4-4 4H16z" fill="#616463" />
          <path d="M0 10h32l3.500 2-1 2 .5 3-3 2H0z" fill="#e94444" />
          <path d="M16 10h16l3.500 2-1 2 .5 3-3 2H16z" fill="#c43a3a" />
          <path d="M8 13l5 1v3H9q-1-1-1-4zM24 13l-5 1v3h4q1-1 1-4z" fill="#fff" />
        </g>
      </Svg>
      <div className="ml-[3px] w-[574px] text-[13px] leading-3">
        <div className="font-bold tracking-[0.05px] text-[#e94444]">BITNINJA</div>
        <div className="tracking-[-0.21px] text-white">CONSOLE</div>
      </div>
      <div className="flex h-11 w-[622px] items-center rounded bg-white pr-[5px] pl-[13px]">
        <Line c="mb-1 size-[15px] text-[#a8a8ae]" box="0 0 15 15" d="M11 6A5 5 0 1 1 1 6a5 5 0 0 1 10 0zM9.500 9.500l5 5" w={1} />
        <span className="ml-[11px] pt-px font-[Open_Sans] text-sm tracking-[-0.48px] text-[#757575] italic">search...</span>
        <div className="ml-auto flex h-[34px] w-[180px] items-center rounded-[3px] bg-linear-to-r from-[#f07f7f] to-[#f28c8c] pl-4 text-sm font-bold tracking-[-0.15px] text-white">
          SEARCH IP ADDRESS
          <Line c="ml-2.5 h-[13px] w-[13px]" box="0 0 13 13" d="M.7 3.500 6.500 9.500l5.800-6" w={1.2} />
        </div>
      </div>
      <div className="ml-auto flex items-center pr-2 text-base text-white">
        <Svg c="size-4" box="0 0 16 16">
          <circle cx="8" cy="8" r="7.300" strokeWidth="1.300" />
          <path d="M6 4.800v6.400L11.200 8z" strokeWidth="1.200" />
        </Svg>
        <span className="mr-[13px] ml-[5px] tracking-[0.3px] [-webkit-text-stroke:0.3px]">Events</span>
        <Svg c="h-4 w-3" box="0 0 12 16">
          <path d="M.7 5V4q.3-3.300 5.300-3.300T11.300 4.500Q11.300 8 8 8.500V10H4.500V7.500Q8 7 8 5 8 3.500 6 3.500T3.500 5zM4.500 12H8v3.200H4.500z" strokeWidth="1.100" />
        </Svg>
        <span className="mr-[11px] ml-1 tracking-[0.2px] [-webkit-text-stroke:0.3px]">Get help</span>
        <Svg c="h-4 w-3.5" box="0 0 14 16">
          <circle cx="7.500" cy="4.500" r="3.700" strokeWidth="1.100" />
          <path d="M0 1h3.500M3 4.500h9M.7 15.300q-.5-5 4-6.300l2.500 2L9.500 9q4.500 1.300 4 6.300zM7.200 11v4" strokeWidth="1.100" />
        </Svg>
        <span className="ml-1 tracking-[0.4px] [-webkit-text-stroke:0.3px]">Account</span>
      </div>
    </div>
  );
}

function NavItem({ w, icon, label, active }: { w: string; icon: ReactNode; label: string; active?: boolean }) {
  return (
    <div className={`flex shrink-0 items-center gap-1 ${w} ${active ? "text-[#e94444]" : "text-[#5d5b68]"}`}>
      {icon}
      <span className={active ? "text-sm font-bold" : "text-sm font-light tracking-[-0.3px] whitespace-nowrap text-[#45434f]"}>{label}</span>
    </div>
  );
}

function SiteNav() {
  return (
    <div className="relative z-10 flex h-[55px] shrink-0 items-center bg-white pl-4 shadow-[0_2px_14px_rgba(0,0,0,0.07)]">
      <NavItem w="w-[91px]" active label="SERVERS" icon={<Line c="h-3 w-3" box="0 0 12 12" d="M.5 1h11v10H.5zM.5 4.300h11M.5 7.600h11M8 2.500v.4M10 2.500v.4M8 6v.2M10 6v.2M8 9.300v.3M10 9.300v.3" w={0.9} />} />
      <NavItem w="w-[158px]" label="NETWORK ATTACKS" icon={<Line c="h-3.5 w-3.5" box="0 0 14 14" d="M7 1.200 13.400 13H.6zM7 5.500v4M7 11v.5" w={0.9} />} />
      <NavItem w="w-[95px]" label="FIREWALL" icon={<Line c="h-3.5 w-3" box="0 0 12 14" d="M6 1q0 3 3 4t2 5q-2 3.500-5 3.500T1 10q-1-4 2.500-5.500Q6 3 6 1zM3 9l2-2M6 11l3-3M4 11l4-4" w={0.9} />} />
      <NavItem w="w-[133px]" label="ANTI-MALWARE" icon={<Line c="h-3.5 w-3" box="0 0 14 14" d="M13 7A6 6 0 1 1 1 7a6 6 0 0 1 12 0zM3 3l8 8M5 6q2-2.500 4 0v3q-2 2-4 0zM4 5l1 1M10 5 9 6M3.500 8H5M9 8h1.500" w={0.8} />} />
      <NavItem w="w-[132px]" label="PHISHING SITES" icon={<Anchor className="size-[13px]" strokeWidth={1.5} />} />
      <NavItem w="w-[92px]" label="LICENSES" icon={<Line c="h-3.5 w-3" box="0 0 12 14" d="M.5 1h11v12H.5zM2.500 3.500h1.500v1.500H2.500zM8 3.500h1.500v1.500H8zM2.500 9.500h1.500V11H2.500zM8 9.500h1.500V11H8zM4.500 7h3M6 5.500v3" w={0.75} />} />
      <NavItem w="w-[146px]" label="SITE PROTECTION" icon={<Line c="h-3.5 w-[15px]" box="0 0 15 14" d="M10 5A2.500 2.500 0 1 1 5 5a2.500 2.500 0 0 1 5 0zM3.500 13q-.5-4 2-5h4q2.500 1 2 5zM5 3.500Q2.500 1 1.500 3.500q0 2 1.500 2.500M.5 10q0-2.500 2-3M10 3.500Q12.500 1 13.500 3.500q0 2-1.500 2.500M14.500 10q0-2.500-2-3" w={0.8} />} />
      <NavItem w="w-[90px]" label="FEEDBACK" icon={<WandSparkles className="size-3" strokeWidth={1.5} />} />
    </div>
  );
}

function PageHead() {
  return (
    <div className="flex h-[108px] shrink-0 flex-col bg-[#fcfcfc] pr-[268px] pl-[268px]">
      <div className="flex items-center pt-[15px]">
        <h1 className="font-[Open_Sans] text-xl leading-none font-bold tracking-[0.27px] text-[#3f3d4d]">Servers</h1>
        <span className="ml-auto text-[13px] text-[#5a5866]">view as</span>
        <div className="ml-[9px] flex h-9 w-24 items-center rounded-[3px] border border-[#e4e4e6] bg-white pl-2 text-[13px] text-[#5a5866]">
          grid
          <span className="ml-[14px] grid h-[15px] w-[17px] grid-cols-2 gap-px">
            <i className="bg-[#6f6d7a]" /><i className="bg-[#6f6d7a]" /><i className="bg-[#6f6d7a]" /><i className="bg-[#6f6d7a]" />
          </span>
          <Line c="ml-[14px] size-2 text-[#a9a8b0]" box="0 0 8 8" d="M1 2.500 4 6l3-3.500" w={1} />
        </div>
        <div className="ml-4 flex h-9 w-[157px] items-center rounded-[3px] bg-linear-to-r from-[#e94343] to-[#ed5e5e] pl-[15px] font-[Roboto] text-[13px] font-bold text-white">
          <Line c="mr-[7px] size-3" box="0 0 12 12" d="M6 .7v10.600M.7 6h10.600" w={1.4} />
          ADD NEW SERVER
        </div>
      </div>
      <div className="mt-auto flex text-[13px] text-[#3f3d4d]">
        <div className="flex h-[30px] w-[90px] items-start border-b-2 border-[#e94444] font-[Open_Sans] font-bold tracking-[0.11px]">
          <span className="leading-5 whitespace-nowrap">All servers (3)</span>
        </div>
        <div className="ml-6 leading-5 tracking-[0.26px] text-[#6d6b78]">No group (3)</div>
      </div>
    </div>
  );
}

const hours = [
  "10:00", "11:00", "12:00", "13:00", "14:00", "15:00", "16:00", "17:00", "18:00", "19:00", "20:00", "21:00", "22:00",
  "23:00", "00:00", "01:00", "02:00", "03:00", "04:00", "05:00", "06:00", "07:00", "08:00", "09:00", "10:00",
];

function Incidents() {
  return (
    <section className="h-[201px] rounded bg-white shadow-[0_1px_5px_rgba(0,0,0,0.14)]">
      <div className="flex h-[58px] items-center border-b border-[#f5f5f5] pr-[17px] pl-[17px] font-[Roboto] text-xs font-medium tracking-[0.38px] text-[#55535f]">
        INCIDENTS
        <span className="relative ml-2 h-3 w-8 rounded-full bg-[#e4e4e6]">
          <i className="absolute -top-0.5 right-0 size-4 rounded-full bg-[#ec5050] shadow-sm" />
        </span>
        <span className="ml-auto text-[10px] tracking-[0.32px] text-[#6d6b78]">SEE MORE</span>
        <Line c="ml-1 size-[9px] text-[#8c8b95]" box="0 0 10 10" d="M.5 5h9M6.500 2l3 3-3 3" w={1} />
      </div>
      <svg viewBox="0 0 1328 143" className="block h-[143px] w-[1328px]">
        <defs>
          <linearGradient id="spike" x1="0" y1="0" x2="0" y2="1">
            <stop offset="0" stopColor="#ea5455" stopOpacity=".6" />
            <stop offset="1" stopColor="#ea5455" stopOpacity="0" />
          </linearGradient>
        </defs>
        <path d="M59 25.500h1242" stroke="#e6e6e6" />
        <path d="M59 89.500h1242" stroke="#ccd6eb" />
        <path d="M1027.500 88.500 1077.200 37 1127 88.500z" fill="url(#spike)" />
        <path d="M83.500 88.300H1027.500L1077.200 37 1127 88.300H1277" fill="none" stroke="#e94444" strokeWidth="2.500" strokeLinejoin="round" />
        <g className="font-[Lato] text-xs" fill="#e94444" textAnchor="end">
          <text x="43.500" y="30.500">1.2</text>
          <text x="43.500" y="93.500">0</text>
        </g>
        <g className="font-[Open_Sans] text-[11px] tracking-[0.39px]" fill="#666" textAnchor="middle">
          {hours.map((h, i) => (
            <text key={i} x={84 + i * 49.7} y="108">{h}</text>
          ))}
        </g>
      </svg>
    </section>
  );
}

function Close() {
  return <Line c="absolute top-[18px] right-4 size-[11px] text-[#86858f]" box="0 0 11 11" d="M1 1l9 9M10 1l-9 9" w={1.3} />;
}

function News() {
  return (
    <section className="mt-6 h-[295px] rounded bg-white shadow-[0_1px_5px_rgba(0,0,0,0.2)]">
      <div className="flex h-14 items-center border-b border-[#e4e4e6] pl-[14px] text-lg font-black tracking-[1.42px] text-[#3f3d4d]">IMPORTANT NEWS (2)</div>
      <div className="ml-6 w-[1273px] pt-4 text-xs text-[#6a6875]">
        <div className="relative flex h-20 rounded-[3px] bg-white shadow-[0_2px_5px_rgba(0,0,0,0.2)]">
          <Svg c="mt-[14px] ml-[17px] size-[47px] text-[#6a6875]" box="0 0 47 47">
            <circle cx="23.500" cy="23.500" r="22" strokeWidth="2.800" />
            <circle cx="23.500" cy="13.500" r="3.200" fill="currentColor" stroke="none" />
            <path d="M18.500 19.500h7.500v13h2.500V36h-10v-3.500h2.700V23h-2.700z" fill="currentColor" stroke="none" />
          </Svg>
          <p className="mt-4 ml-4 leading-[18px] tracking-[0.24px]">
            Your credit card is about to expire. Please, don't forget to renew your credit card data at the 'Payment' menu, before the expiration date: 8/2022
          </p>
          <Close />
        </div>
        <div className="relative mt-4 flex h-[103px] rounded-[3px] bg-white shadow-[0_2px_5px_rgba(0,0,0,0.2)]">
          <Svg c="mt-4 ml-[19px] h-[50px] w-11 text-[#6a6875]" box="0 0 44 50">
            <path d="M22 1q9 6 20.500 6v16Q42 41 22 49 2 41 1.500 23V7Q13 7 22 1z" strokeWidth="1.400" />
            <path d="M22 6q8 4.500 16.500 5v12Q38 38 22 45 6 38 5.500 23V11Q14 10.500 22 6z" strokeWidth="1.200" />
            <rect x="12" y="20.500" width="20" height="15" rx="1.500" strokeWidth="1.400" />
            <path d="M15 20v-3.500a7 7 0 0 1 14 0V20M18.500 20v-3.500a3.500 3.500 0 0 1 7 0V20M22 24a2.200 2.200 0 0 1 1.300 4l.7 4h-4l.7-4A2.200 2.200 0 0 1 22 24z" strokeWidth="1.200" />
          </Svg>
          <div className="ml-[19px]">
            <div className="mt-3.5 leading-[18px] tracking-[0.33px] text-[#2b2936]">WEBSITE CLEANING</div>
            <p className="mt-[5px] leading-[18px] tracking-[0.28px]">
              Frequent issues with specific customers? High load caused by malware? One of our Security Specialists will deep clean the website for you clearing all infections!
            </p>
            <div className="mt-[7px] flex h-[30px] w-[221px] items-center justify-center rounded-[3px] bg-[#17cb93] text-sm font-bold tracking-[0.47px] text-white">LET'S CLEAN A WEBSITE!</div>
          </div>
          <Close />
        </div>
      </div>
    </section>
  );
}

function ServerCard({ name, id, track }: { name: string; id: string; track: string }) {
  return (
    <div className="relative h-[200px] w-80 overflow-hidden rounded bg-white px-6 shadow-[0_1px_4px_rgba(0,0,0,0.1)]">
      <Svg c="absolute top-0 right-0 h-[90px] w-40" box="160 0 160 90">
        <g fill="#f8f8f8" stroke="none">
          <path d="M174 0h66l-33 19z" />
          <path d="M253 0h63l-29 19z" />
          <path d="M246.500 2.500 283 23v43l-36.500 21.500L210 66V23z" />
          <path d="M320 2.500V86l-31.500-19V23z" />
        </g>
      </Svg>
      <div className="relative pt-[23px]">
        <div className="flex h-[18px] items-center justify-between pr-[3px]">
          <span className={`font-[Open_Sans] text-[13px] font-bold text-[#3f3d4d] ${track}`}>{name}</span>
          <Svg c="mb-1 size-[14px] text-[#85838f]" box="0 0 18 18">
            <path d="M7.400 1h3.200l.5 2.200 1.800 1 2.100-.7 1.600 2.800L15.300 8v2l1.300 1.600-1.600 2.800-2.100-.7-1.800 1-.5 2.300H7.400l-.5-2.300-1.800-1-2.100.7-1.600-2.800L2.700 10V8L1.400 6.300 3 3.500l2.100.7 1.800-1z" strokeWidth="1.300" />
            <circle cx="9" cy="9" r="3" strokeWidth="1.200" />
          </Svg>
        </div>
        <div className="mt-1 text-[9px] leading-3 tracking-[-0.36px] text-[#b5b4bb]">{id}</div>
        <div className="mt-5 text-[9px] leading-3 text-[#94939c]">SERVER HEALTH</div>
        <div className="mt-1.5 flex items-center text-[13px] leading-[18px] font-bold text-[#28b765]">
          <Svg c="mr-2 size-3.5" box="0 0 14 14">
            <path d="M7 0q3 1.800 6.500 1.800Q14.500 11 7 14-.5 11 .5 1.800 4 1.800 7 0z" fill="currentColor" stroke="none" />
            <path d="m4 7 2.300 2.300L10 5.300" stroke="#fff" strokeWidth="1.500" />
          </Svg>
          Trial - Active
        </div>
        <div className="mt-3 flex">
          <div className="w-[84px]">
            <div className="text-[9px] leading-3 tracking-[-0.32px] text-[#94939c]">MODULES</div>
            <div className="mt-[3px] flex gap-0.5 pl-px">
              <i className="size-2 rounded-full bg-[#6f6d7a]" /><i className="size-2 rounded-full bg-[#6f6d7a]" />
              <i className="size-2 rounded-full bg-[#6f6d7a]" /><i className="size-2 rounded-full bg-[#6f6d7a]" />
              <i className="size-2 rounded-full bg-[#cfcfd1]" /><i className="size-2 rounded-full bg-[#cfcfd1]" />
            </div>
          </div>
          <div>
            <div className="text-[9px] leading-3 tracking-[-0.08px] text-[#94939c]">AGENT VERSION</div>
            <div className="mt-[3px] text-[13px] leading-4 tracking-[-0.33px] text-[#6a6875]">2.34.0-1</div>
          </div>
        </div>
      </div>
    </div>
  );
}

function Console() {
  return (
    <div className="relative flex h-[931px] overflow-hidden bg-[#f5f5f5] font-[Lato]">
      <div className="flex w-[1864px] flex-col">
        <SiteHeader />
        <SiteNav />
        <PageHead />
        <div className="px-[268px] pt-6">
          <Incidents />
          <News />
          <div className="mt-4 flex gap-4">
            <ServerCard name="Docker-Mochi" id="#116659" track="tracking-[-0.14px]" />
            <ServerCard name="sg-unturned" id="#116656" track="tracking-[0.1px]" />
            <ServerCard name="us-dallas" id="#116653" track="tracking-[0.3px]" />
            <div className="flex h-[200px] w-80 justify-center rounded border-2 border-dashed border-[#c8c8c8] pt-[131px] font-[Roboto] text-[11px] leading-[18px] font-bold text-[#e94444]">
              <Line c="mt-1 mr-1.5 size-[11px]" box="0 0 12 12" d="M6 .7v10.600M.7 6h10.600" w={1.2} />
              <span>ADD NEW SERVER</span>
            </div>
          </div>
        </div>
      </div>
      <div className="flex w-[15px] flex-col items-center bg-[#f1f1f1]">
        <Line c="my-1 size-[7px] shrink-0 text-[#a3a3a3]" box="0 0 8 8" d="M1 6 4 2.500 7 6" w={1.8} />
        <div className="h-[721px] w-full bg-[#cdcdcd]" />
        <Line c="mt-auto mb-1 size-[7px] text-[#505050]" box="0 0 8 8" d="M1 2 4 5.500 7 2" w={1.8} />
      </div>
      <div className="absolute right-[35px] bottom-5 flex gap-5">
        <div className="flex h-[60px] w-[168px] items-center rounded-full bg-[#dc2626] pl-[30px] font-bold tracking-[0.4px] text-white shadow-[0_3px_18px_rgba(0,0,0,0.25)]">
          Get Started
          <span className="ml-2 flex size-6 items-center justify-center rounded-full bg-white text-sm font-normal text-[#dc2626]">5</span>
        </div>
        <div className="flex size-[60px] items-center justify-center rounded-full bg-[#e94848] shadow-[0_3px_18px_rgba(0,0,0,0.25)]">
          <Svg c="h-8 w-7" box="0 0 28 32">
            <path d="M4 0h20q4 0 4 4v28l-6-3H4q-4 0-4-4V4q0-4 4-4z" fill="#fff" stroke="none" />
            <path d="M4.500 20q9.500 7 19 0" stroke="#e94848" strokeWidth="1.600" strokeLinecap="round" />
          </Svg>
        </div>
      </div>
    </div>
  );
}

export default function App() {
  return (
    <div className="h-[1080px] w-[1920px] overflow-hidden bg-[#0f0b1c] font-[Open_Sans]">
      <Taskbar />
      <div className="flex">
        <Rail />
        <div className="w-px shrink-0 bg-[linear-gradient(180deg,#05040b_30px,#a66cff_30px,#9560e6_200px,#4a2f80_560px,#1d1330_1032px)]" />
        <div className="w-[1879px] shrink-0">
          <TabStrip />
          <AddressBar />
          <Bookmarks />
          <Console />
        </div>
      </div>
    </div>
  );
}
